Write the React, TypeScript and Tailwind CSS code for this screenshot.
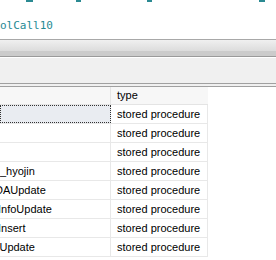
import React from 'react';

const rows: { name: string; indent: string }[] = [
  { name: '', indent: 'ml-0' },
  { name: '', indent: 'ml-0' },
  { name: '', indent: 'ml-0' },
  { name: '_hyojin', indent: 'ml-0' },
  { name: 'DAUpdate', indent: '-ml-[5px]' },
  { name: 'InfoUpdate', indent: '-ml-[2px]' },
  { name: 'Insert', indent: '-ml-[2px]' },
  { name: 'lUpdate', indent: '-ml-[3px]' },
];

export default function App(): React.ReactElement {
  return (
    <div className="h-[260px] w-[276px] overflow-hidden bg-white">
      {/* editor fragment */}
      <div className="flex h-[39px] flex-col">
        <div className="flex h-[3px]">
          <div className="ml-[26px] h-[2px] w-[7px] bg-[#2b8a92]" />
          <div className="ml-[43px] h-[2px] w-[5px] bg-[#2b8a92]" />
          <div className="ml-[66px] h-[2px] w-[5px] bg-[#2b8a92]" />
          <div className="ml-[107px] h-[2px] w-[6px] bg-[#2b8a92]" />
        </div>
        <div
          className="mt-[16px] text-[11px] leading-[13px] text-[#1f8a94]"
          style={{ fontFamily: '"DejaVu Sans Mono", monospace' }}
        >
          olCall10
        </div>
      </div>

      {/* splitter / toolbar */}
      <div className="h-[1px] bg-[#a8a8a8]" />
      <div className="h-[11px] bg-gradient-to-b from-[#f0f0f0] to-[#dcdcdc]" />
      <div className="h-[5px] bg-[#cbcbcb]" />
      <div className="h-[1px] bg-[#9a9a9a]" />
      <div className="h-[26px] border-t border-[#ffffff] bg-[#f0f0f0]" />
      <div className="h-[1px] bg-[#a0a0a0]" />
      <div className="h-[2px] bg-[#f0f0f0]" />
      <div className="h-[1px] bg-[#a0a0a0]" />

      {/* results grid */}
      <div
        className="text-[11px] text-black"
        style={{ fontFamily: '"Liberation Sans", Arial, sans-serif' }}
      >
        <div className="flex h-[18px] w-[208px] border-b border-[#e4e4e4] bg-[#f7f7f7]">
          <div className="w-[111px] shrink-0 border-r border-[#e4e4e4]" />
          <div className="flex items-center pl-[6px] leading-none">type</div>
        </div>
        {rows.map((r, i) => (
          <div key={i} className="flex h-[19px] w-[208px] border-b border-[#e8e8e8]">
            <div
              className={
                i === 0
                  ? 'w-[111px] shrink-0 border border-dotted border-[#333] bg-[#e9ecf1]'
                  : 'flex w-[111px] shrink-0 items-center overflow-hidden border-r border-[#e8e8e8]'
              }
            >
              {r.name && (
                <span className={'whitespace-nowrap leading-none ' + r.indent}>{r.name}</span>
              )}
            </div>
            <div className="flex w-[97px] items-center whitespace-nowrap border-r border-[#e8e8e8] pl-[6px] leading-none">
              stored procedure
            </div>
          </div>
        ))}
      </div>
    </div>
  );
}
